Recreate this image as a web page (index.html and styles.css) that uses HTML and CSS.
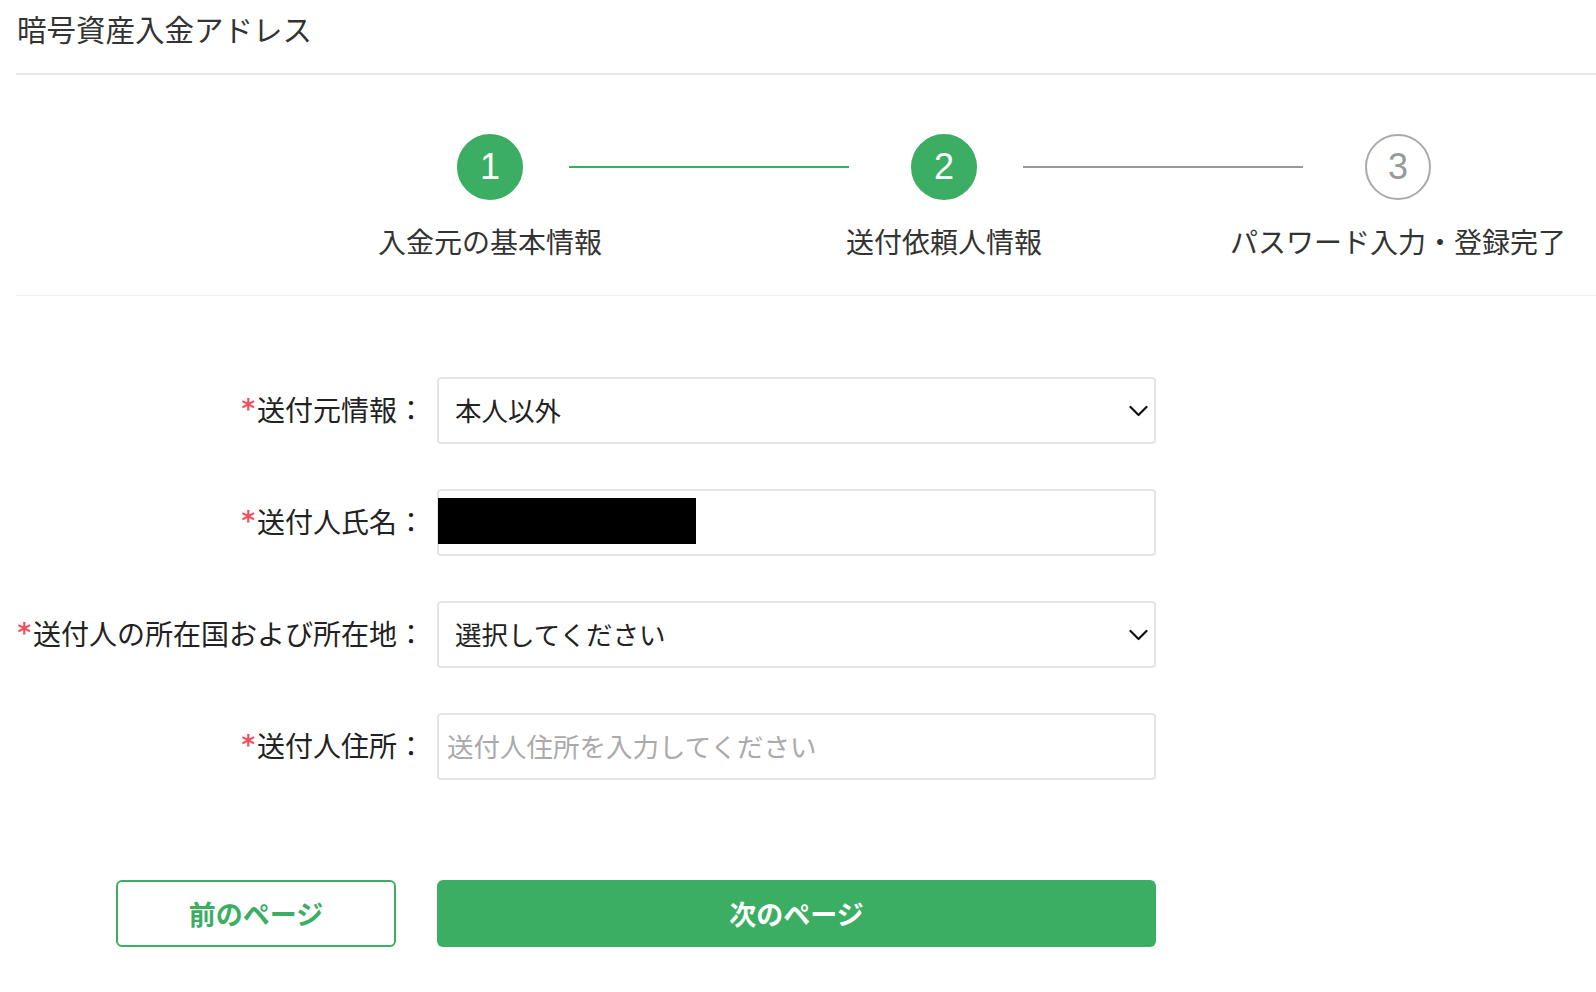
FILE: index.html
```html
<!DOCTYPE html>
<html lang="ja">
<head>
  <meta charset="UTF-8" />
  <meta name="viewport" content="width=device-width, initial-scale=1.0" />
  <title>暗号資産入金アドレス</title>
  <link rel="stylesheet" href="styles.css">
</head>
<body>
  <div class="page">
    <div class="page-header">
      <h1>暗号資産入金アドレス</h1>
    </div>

    <div class="steps">
      <div class="steps-track">
        <div class="step done">
          <div class="step-icon">1</div>
          <div class="step-title">入金元の基本情報</div>
        </div>
        <div class="step-line done"></div>
        <div class="step done">
          <div class="step-icon">2</div>
          <div class="step-title">送付依頼人情報</div>
        </div>
        <div class="step-line"></div>
        <div class="step">
          <div class="step-icon">3</div>
          <div class="step-title">パスワード入力・登録完了</div>
        </div>
      </div>
    </div>

    <form class="form" onsubmit="return false">
      <label class="form-label"><span class="req">*</span>送付元情報：</label>
      <div class="field select">
        <span class="field-value">本人以外</span>
        <svg class="chevron" width="19" height="12" viewBox="0 0 19 12"><path d="M1.5 2 L9.5 10 L17.5 2" fill="none" stroke="#111" stroke-width="2.2" stroke-linecap="round" stroke-linejoin="round"/></svg>
      </div>

      <label class="form-label"><span class="req">*</span>送付人氏名：</label>
      <div class="field">
        <span class="redacted"></span>
      </div>

      <label class="form-label"><span class="req">*</span>送付人の所在国および所在地：</label>
      <div class="field select">
        <span class="field-value">選択してください</span>
        <svg class="chevron" width="19" height="12" viewBox="0 0 19 12"><path d="M1.5 2 L9.5 10 L17.5 2" fill="none" stroke="#111" stroke-width="2.2" stroke-linecap="round" stroke-linejoin="round"/></svg>
      </div>

      <label class="form-label"><span class="req">*</span>送付人住所：</label>
      <input class="field text-input" type="text" placeholder="送付人住所を入力してください">

      <div class="form-actions-left">
        <button class="btn btn-outline" type="button">前のページ</button>
      </div>
      <button class="btn btn-primary" type="submit">次のページ</button>
    </form>
  </div>
</body>
</html>
```

FILE: styles.css
```css
:root {
  --green: #3bae63;
  --text: #222;
  --muted: #999;
  --border: #e4e4e4;
}
* {
  box-sizing: border-box;
}
body {
  margin: 0;
  background: #fff;
  color: var(--text);
  font-family: "Noto Sans CJK JP", "Noto Sans", sans-serif;
}
.page {
  padding-left: 16px;
}
.page-header {
  height: 75px;
  padding-top: 7px;
  border-bottom: 2px solid #e8e8e8;
}
.page-header h1 {
  margin: 0;
  padding-left: 1px;
  font-size: 29.5px;
  line-height: 42px;
  font-weight: 400;
  color: #333;
}
.steps {
  padding: 59px 0 34px;
  border-bottom: 1px solid #f0f0f0;
}
.steps-track {
  display: flex;
  align-items: flex-start;
  margin-left: 441px;
}
.step {
  width: 66px;
  display: flex;
  flex-direction: column;
  align-items: center;
}
.step-icon {
  width: 66px;
  height: 66px;
  border-radius: 50%;
  border: 2px solid #aaa;
  color: var(--muted);
  display: flex;
  align-items: center;
  justify-content: center;
  font-family: "Liberation Sans", sans-serif;
  font-size: 36px;
}
.step.done .step-icon {
  background: var(--green);
  border-color: var(--green);
  color: #fff;
}
.step-title {
  margin-top: 21px;
  white-space: nowrap;
  font-size: 28px;
  line-height: 40px;
  color: #333;
}
.step-line {
  width: 280px;
  height: 2px;
  margin: 32px 62px 0 46px;
  background: var(--muted);
}
.step-line.done {
  background: var(--green);
}
.form {
  display: grid;
  grid-template-columns: 421px 719px;
  row-gap: 45px;
  align-items: center;
  margin-top: 81px;
}
.form-label {
  text-align: right;
  padding: 0 12px 4px 0;
  font-size: 28px;
  line-height: 40px;
  color: var(--text);
  white-space: nowrap;
}
.req {
  color: #f0505a;
  font-family: "DejaVu Sans", sans-serif;
  font-weight: 700;
  font-size: 26px;
  vertical-align: 3px;
  margin-right: 2px;
}
.field {
  height: 67px;
  border: 2px solid var(--border);
  border-radius: 4px;
  background: #fff;
  display: flex;
  align-items: center;
  font-family: inherit;
  font-size: 26.5px;
  color: var(--text);
}
.select {
  justify-content: space-between;
  padding: 0 6px 0 16px;
}
.field-value {
  margin-bottom: 3px;
}
.chevron {
  margin-top: 1px;
}
.redacted {
  display: block;
  align-self: flex-start;
  width: 258px;
  height: 46px;
  margin: 7px 0 0 -1px;
  background: #000;
}
.text-input {
  width: 100%;
  padding: 0 8px 3px;
  outline: none;
}
.text-input::placeholder {
  color: #aaa;
}
.form-actions-left {
  display: flex;
  justify-content: flex-end;
  padding-right: 41px;
  margin-top: 55px;
}
.btn {
  height: 67px;
  border-radius: 6px;
  font-family: inherit;
  font-size: 27px;
  font-weight: 700;
  cursor: pointer;
}
.btn-outline {
  width: 280px;
  background: #fff;
  border: 2px solid var(--green);
  color: var(--green);
}
.btn-primary {
  margin-top: 55px;
  width: 100%;
  background: var(--green);
  border: none;
  color: #fff;
}
.btn:hover {
  opacity: 0.85;
}
```
